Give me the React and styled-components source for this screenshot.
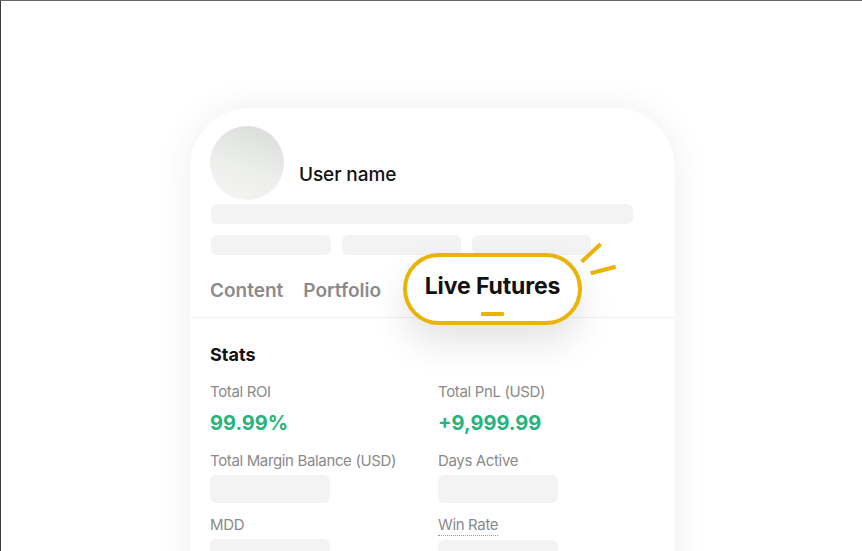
import React from "react";
import styled, { createGlobalStyle } from "styled-components";

const GlobalStyle = createGlobalStyle`
  html, body {
    margin: 0;
    padding: 0;
    background: #ffffff;
  }
  body {
    font-family: "Inter", "Liberation Sans", sans-serif;
    color: #121212;
  }
`;

const stats = [
  { label: "Total ROI", value: "99.99%" },
  { label: "Total PnL (USD)", value: "+9,999.99" },
  { label: "Total Margin Balance (USD)" },
  { label: "Days Active" },
  { label: "MDD" },
  { label: "Win Rate", dotted: true },
];

export default function App() {
  return (
    <>
      <GlobalStyle />
      <Page>
        <Card>
          <Header>
            <Avatar />
            <UserName>User name</UserName>
          </Header>
          <Skeleton $w={422} $h={20} $mt={4} />
          <SkeletonRow>
            <Skeleton $w={120} $h={20} />
            <Skeleton $w={119} $h={20} />
            <Skeleton $w={119} $h={20} />
          </SkeletonRow>

          <TabRow>
            <Tab>Content</Tab>
            <Tab>Portfolio</Tab>
            <Callout>
              <CalloutText>Live Futures</CalloutText>
              <CalloutBar />
            </Callout>
            <Sparks width="50" height="45" viewBox="0 0 50 45">
              <line x1="6.7" y1="23.7" x2="25.7" y2="6" />
              <line x1="15.7" y1="35.3" x2="40.7" y2="28.7" />
            </Sparks>
          </TabRow>

          <Section>
            <Title>Stats</Title>
            <StatGrid>
              {stats.map((s) => (
                <Stat key={s.label}>
                  <Label $dotted={s.dotted}>{s.label}</Label>
                  {s.value ? (
                    <Value>{s.value}</Value>
                  ) : (
                    <Skeleton $w={120} $h={28} $mt={4} />
                  )}
                </Stat>
              ))}
            </StatGrid>
          </Section>
        </Card>
      </Page>
    </>
  );
}

const Page = styled.div`
  width: 862px;
  height: 551px;
  box-sizing: border-box;
  border-top: 1px solid #6a6a6a;
  border-left: 1px solid #3a3a3a;
  padding: 107px 0 0 189px;
  overflow: hidden;
`;

const Card = styled.div`
  width: 485px;
  box-sizing: border-box;
  min-height: 520px;
  padding: 18px 20px 0 21px;
  background: #ffffff;
  border-radius: 60px 60px 0 0;
  box-shadow: 0 0 36px rgba(0, 0, 0, 0.07);
`;

const Header = styled.div`
  display: flex;
  align-items: center;
  gap: 15px;
  margin-left: -1px;
`;

const Avatar = styled.div`
  width: 74px;
  height: 74px;
  border-radius: 50%;
  background: linear-gradient(200deg, #d9dbd9 0%, #eceeec 55%, #f6f6f4 100%);
`;

const UserName = styled.div`
  font-size: 19px;
  font-weight: 500;
  padding-top: 22px;
  letter-spacing: -0.1px;
`;

const Skeleton = styled.div`
  width: ${(p) => p.$w}px;
  height: ${(p) => p.$h}px;
  margin-top: ${(p) => p.$mt || 0}px;
  border-radius: 6px;
  background: #f3f3f3;
`;

const SkeletonRow = styled.div`
  display: flex;
  gap: 11px;
  margin-top: 11px;
`;

const TabRow = styled.div`
  position: relative;
  display: flex;
  gap: 20px;
  margin: 0 -20px 0 -21px;
  padding: 24px 20px 14px;
  border-bottom: 1px solid #f1f1f1;
`;

const Tab = styled.div`
  font-size: 19px;
  line-height: 24px;
  font-weight: 600;
  color: #8b8b8b;
`;

const Callout = styled.div`
  position: absolute;
  left: 213px;
  top: -2px;
  width: 179px;
  height: 72px;
  box-sizing: border-box;
  border: 4px solid #eab308;
  border-radius: 36px;
  background: #ffffff;
  box-shadow: 0 18px 36px rgba(0, 0, 0, 0.11);
  display: flex;
  flex-direction: column;
  align-items: center;
  padding-top: 15px;
`;

const CalloutText = styled.div`
  font-size: 23px;
  line-height: 28px;
  font-weight: 700;
  color: #111111;
  letter-spacing: -0.1px;
`;

const CalloutBar = styled.div`
  width: 23px;
  height: 4px;
  margin-top: 12px;
  border-radius: 1px;
  background: #eab308;
`;

const Sparks = styled.svg`
  position: absolute;
  left: 385px;
  top: -17px;
  stroke: #eab308;
  stroke-width: 4;
`;

const Section = styled.div`
  padding-top: 26px;
  margin-left: -1px;
`;

const Title = styled.div`
  font-size: 18px;
  line-height: 22px;
  font-weight: 700;
`;

const StatGrid = styled.div`
  display: grid;
  grid-template-columns: 228px 1fr;
  row-gap: 12px;
  margin-top: 16px;
`;

const Stat = styled.div`
  display: flex;
  flex-direction: column;
  align-items: flex-start;
`;

const Label = styled.div`
  font-size: 15px;
  line-height: 20px;
  color: #8a8a8a;
  letter-spacing: -0.35px;
  border-bottom: ${(p) => (p.$dotted ? "1px dotted #9a9a9a" : "none")};
`;

const Value = styled.div`
  margin: 8px 0 3px;
  font-size: 20px;
  line-height: 26px;
  font-weight: 700;
  color: #26b47c;
`;
